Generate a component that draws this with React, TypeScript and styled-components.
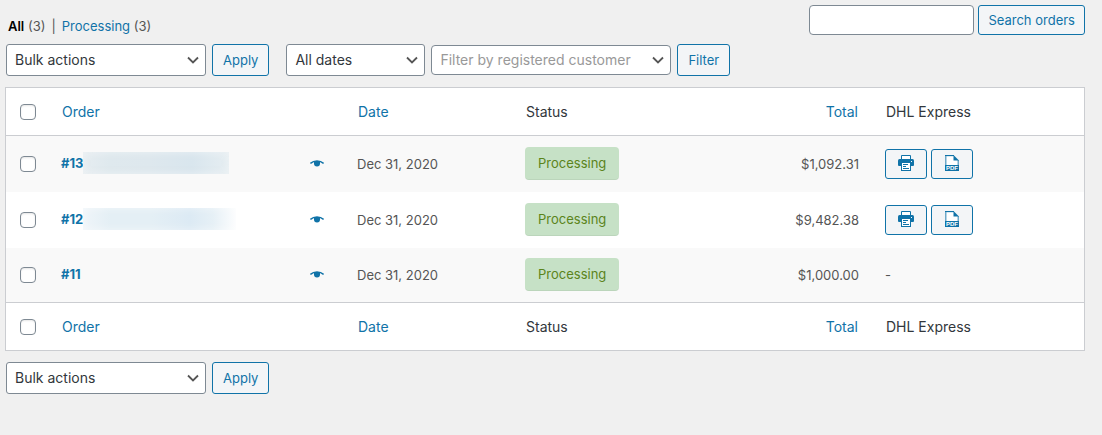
import React from "react";
import styled, { createGlobalStyle } from "styled-components";

const colors = {
  page: "#f0f0f0",
  link: "#1073a8",
  text: "#32373c",
  muted: "#555555",
  control: "#7e8993",
  line: "#cbcdd1",
  button: "#f3f5f7",
};

const GlobalStyle = createGlobalStyle`
  *, *::before, *::after { box-sizing: border-box; }
  body {
    margin: 0;
    background: ${colors.page};
    color: ${colors.text};
    font-family: Inter, "Liberation Sans", sans-serif;
    font-size: 13px;
    line-height: 18px;
  }
`;

const Page = styled.main`
  padding: 5px 17px 40px 5px;
`;

const TopBar = styled.div`
  display: flex;
  justify-content: space-between;
  align-items: flex-end;
  padding: 0 0 9px 3px;
`;

const Views = styled.ul`
  display: flex;
  gap: 6px;
  margin: 0;
  padding: 0;
  list-style: none;
  color: ${colors.muted};
`;

const ViewLink = styled.a<{ $current?: boolean }>`
  color: ${(p) => (p.$current ? "#000" : colors.link)};
  font-weight: ${(p) => (p.$current ? 600 : 400)};
  text-decoration: none;
`;

const SearchForm = styled.form`
  display: flex;
  gap: 4px;
`;

const SearchInput = styled.input`
  width: 165px;
  height: 30px;
  padding: 0 8px;
  border: 1px solid ${colors.control};
  border-radius: 4px;
  background: #fff;
  font: inherit;
  font-size: 14px;
`;

const Button = styled.button<{ $compact?: boolean }>`
  height: ${(p) => (p.$compact ? 30 : 32)}px;
  padding: 0 ${(p) => (p.$compact ? 9 : 10)}px;
  border: 1px solid ${colors.link};
  border-radius: 3px;
  background: ${colors.button};
  color: ${colors.link};
  font: inherit;
  white-space: nowrap;
  cursor: pointer;
`;

const Toolbar = styled.div`
  display: flex;
  flex-wrap: wrap;
  align-items: center;
  gap: 6px;
  padding: 0 1px;
`;

const Filters = styled.div`
  display: flex;
  align-items: center;
  gap: 6px;
  margin-left: 11px;
`;

const SelectBox = styled.div<{ $width: number }>`
  display: grid;
  align-items: center;
  width: ${(p) => p.$width}px;

  & > * {
    grid-area: 1 / 1;
  }

  svg {
    justify-self: end;
    margin-right: 7px;
    pointer-events: none;
  }
`;

const Select = styled.select<{ $placeholder?: boolean }>`
  appearance: none;
  width: 100%;
  height: ${(p) => (p.$placeholder ? 30 : 32)}px;
  padding: 0 24px 0 8px;
  border: 1px solid ${colors.control};
  border-radius: ${(p) => (p.$placeholder ? 4 : 3)}px;
  background: #fff;
  color: ${(p) => (p.$placeholder ? "#999" : colors.text)};
  font: inherit;
  font-size: 14px;
`;

const Table = styled.table`
  width: 100%;
  margin: 11px 0;
  border: 1px solid ${colors.line};
  border-spacing: 0;
  background: #fff;
  table-layout: fixed;
  color: ${colors.muted};
`;

const Col = styled.col<{ $width?: number }>`
  width: ${(p) => (p.$width ? `${p.$width}px` : "auto")};
`;

const HeadCell = styled.th<{ $edge: "top" | "bottom"; $right?: boolean }>`
  height: 48px;
  padding: ${(p) => (p.$right ? "0 17px 0 10px" : "0 10px 0 11px")};
  border-${(p) => p.$edge}: 1px solid ${colors.line};
  color: ${colors.text};
  font-size: 14px;
  font-weight: 400;
  text-align: ${(p) => (p.$right ? "right" : "left")};
`;

const SelectAllCell = styled.td<{ $edge: "top" | "bottom" }>`
  height: 48px;
  padding: 0 0 0 14px;
  border-${(p) => p.$edge}: 1px solid ${colors.line};
`;

const HeadLink = styled.a`
  color: ${colors.link};
  text-decoration: none;
`;

const Row = styled.tr<{ $height: number }>`
  height: ${(p) => p.$height}px;

  &:nth-child(odd) {
    background: #f9f9f9;
  }
`;

const Cell = styled.td<{ $right?: boolean }>`
  padding: ${(p) => (p.$right ? "0 16px 0 10px" : "0 10px")};
  text-align: ${(p) => (p.$right ? "right" : "left")};
`;

const CheckCell = styled.td`
  padding: 0 0 0 14px;
`;

const Checkbox = styled.input`
  appearance: none;
  display: block;
  width: 16px;
  height: 16px;
  margin: 0;
  border: 1px solid ${colors.control};
  border-radius: 4px;
  background: #fff;
  box-shadow: inset 0 1px 2px rgba(0, 0, 0, 0.1);

  &:checked {
    background: ${colors.link};
  }
`;

const OrderLine = styled.div`
  display: flex;
  align-items: center;
  padding-bottom: 2px;
`;

const OrderLink = styled.a`
  color: ${colors.link};
  font-weight: 700;
  text-decoration: none;
`;

const Redacted = styled.span<{ $width: number }>`
  width: ${(p) => p.$width}px;
  height: 22px;
  background: linear-gradient(90deg, #e6edf1, #dfe9ee 18%, #dee8ee 45%, #d9e6ee 75%, #e6eef2);
  box-shadow: inset 0 0 8px rgba(249, 249, 249, 0.5);

  tr:nth-child(even) & {
    background: linear-gradient(90deg, #eff5f9, #e4eff5 18%, #e4eff5 45%, #dceaf4 70%, #e6f0f6 85%, #fcfdfe);
    box-shadow: inset 0 0 8px rgba(255, 255, 255, 0.5);
  }
`;

const PreviewButton = styled.button`
  display: grid;
  place-items: center;
  width: 40px;
  height: 20px;
  margin-left: auto;
  padding: 0;
  border: 0;
  background: none;
  color: ${colors.link};
  cursor: pointer;
`;

const Status = styled.mark`
  display: block;
  width: fit-content;
  margin-bottom: 1px;
  padding: 0 13px;
  border-bottom: 1px solid rgba(0, 0, 0, 0.05);
  border-radius: 4px;
  background: #c6e1c6;
  color: #5b841b;
  line-height: 32px;
`;

const Actions = styled.div`
  display: flex;
  gap: 4px;
`;

const IconButton = styled.button`
  display: grid;
  place-items: center;
  width: 42px;
  height: 30px;
  padding: 0 0 2px;
  border: 1px solid ${colors.link};
  border-radius: 3px;
  background: ${colors.button};
  color: ${colors.link};
  cursor: pointer;
`;

const Chevron = () => (
  <svg width="12" height="8" viewBox="0 0 12 8" fill="none" aria-hidden="true">
    <path d="M1 1.5 6 6.5 11 1.5" stroke="#555" strokeWidth="1.8" />
  </svg>
);

const EyeIcon = () => (
  <svg width="14" height="8" viewBox="0 0 14 8" aria-hidden="true">
    <path
      d="M.4 4.500C2.600 2.400 4.700 2 7 2S11.400 2.400 13.600 4.500"
      fill="none"
      stroke="currentColor"
      strokeWidth="1.500"
    />
    <path d="M4 2H10V4.500A3 3 0 0 1 4 4.500Z" fill="currentColor" />
  </svg>
);

const PrintIcon = () => (
  <svg width="16" height="16" viewBox="0 0 16 16" aria-hidden="true">
    <path d="M3.500 5V.5H12.500V5" fill="#fff" stroke="currentColor" />
    <path
      d="M1.500 4H14.500Q16 4 16 5.500V10Q16 11 15 11H1Q0 11 0 10V5.500Q0 4 1.500 4Z"
      fill="currentColor"
    />
    <path d="M3 8H13V16H3Z" fill="currentColor" />
    <path d="M4 8H12V15H4Z" fill="#fff" />
    <path d="M5 9.500H10M5 11.500H8M5 13.500H11" stroke="currentColor" />
    <rect x="13" y="6" width="1" height="1" fill="#fff" />
  </svg>
);

const PdfIcon = () => (
  <svg width="14" height="16" viewBox="0 0 14 16" aria-hidden="true">
    <path d="M.5 15.500V.5H9L13.500 5V15.500Z" fill="#fff" />
    <path d="M.75 11V.5H9M13.250 5V11" fill="none" stroke="currentColor" strokeWidth="1.500" strokeOpacity=".6" />
    <path d="M0 .5H9" stroke="currentColor" />
    <path d="M8.500 0 14 5.500H8.500Z" fill="currentColor" />
    <rect y="10" width="14" height="6" fill="currentColor" />
    <text x="7" y="15" fill="#fff" fontSize="6" fontWeight="700" textAnchor="middle">
      PDF
    </text>
  </svg>
);

type Order = { id: string; redacted?: number; total: string; label: boolean };

const orders: Order[] = [
  { id: "#13", redacted: 146, total: "$1,092.31", label: true },
  { id: "#12", redacted: 153, total: "$9,482.38", label: true },
  { id: "#11", total: "$1,000.00", label: false },
];

const HeadingRow = ({ edge }: { edge: "top" | "bottom" }) => (
  <tr>
    <SelectAllCell $edge={edge}>
      <Checkbox type="checkbox" aria-label="Select all orders" />
    </SelectAllCell>
    <HeadCell $edge={edge}><HeadLink href="#order">Order</HeadLink></HeadCell>
    <HeadCell $edge={edge}><HeadLink href="#date">Date</HeadLink></HeadCell>
    <HeadCell $edge={edge}>Status</HeadCell>
    <HeadCell $edge={edge} $right><HeadLink href="#total">Total</HeadLink></HeadCell>
    <HeadCell $edge={edge}>DHL Express</HeadCell>
  </tr>
);

const BulkActions = () => (
  <>
    <SelectBox $width={200}>
      <Select aria-label="Select bulk action">
        <option>Bulk actions</option>
      </Select>
      <Chevron />
    </SelectBox>
    <Button type="button">Apply</Button>
  </>
);

export default function App() {
  return (
    <>
      <GlobalStyle />
      <Page>
        <TopBar>
          <Views>
            <li><ViewLink href="#all" $current>All</ViewLink> (3)</li>
            <li aria-hidden="true">|</li>
            <li><ViewLink href="#processing">Processing</ViewLink> (3)</li>
          </Views>
          <SearchForm onSubmit={(e) => e.preventDefault()}>
            <SearchInput type="search" aria-label="Search orders" />
            <Button $compact>Search orders</Button>
          </SearchForm>
        </TopBar>
        <Toolbar>
          <BulkActions />
          <Filters>
            <SelectBox $width={139}>
              <Select aria-label="Filter by date">
                <option>All dates</option>
              </Select>
              <Chevron />
            </SelectBox>
            <SelectBox $width={240}>
              <Select aria-label="Filter by registered customer" $placeholder>
                <option>Filter by registered customer</option>
              </Select>
              <Chevron />
            </SelectBox>
            <Button type="button">Filter</Button>
          </Filters>
        </Toolbar>
        <Table>
          <colgroup>
            <Col $width={45} />
            <Col />
            <Col $width={168} />
            <Col $width={168} />
            <Col $width={192} />
            <Col $width={209} />
          </colgroup>
          <thead><HeadingRow edge="bottom" /></thead>
          <tbody>
            {orders.map((order) => (
              <Row key={order.id} $height={order.label ? 56 : 54}>
                <CheckCell>
                  <Checkbox type="checkbox" aria-label={`Select order ${order.id}`} />
                </CheckCell>
                <Cell>
                  <OrderLine>
                    <OrderLink href="#edit">{order.id}</OrderLink>
                    {order.redacted && <Redacted $width={order.redacted} />}
                    <PreviewButton type="button" aria-label="Preview"><EyeIcon /></PreviewButton>
                  </OrderLine>
                </Cell>
                <Cell>Dec 31, 2020</Cell>
                <Cell><Status>Processing</Status></Cell>
                <Cell $right>{order.total}</Cell>
                <Cell>
                  {order.label ? (
                    <Actions>
                      <IconButton type="button" aria-label="Print label"><PrintIcon /></IconButton>
                      <IconButton type="button" aria-label="Download PDF"><PdfIcon /></IconButton>
                    </Actions>
                  ) : (
                    "-"
                  )}
                </Cell>
              </Row>
            ))}
          </tbody>
          <tfoot><HeadingRow edge="top" /></tfoot>
        </Table>
        <Toolbar>
          <BulkActions />
        </Toolbar>
      </Page>
    </>
  );
}
